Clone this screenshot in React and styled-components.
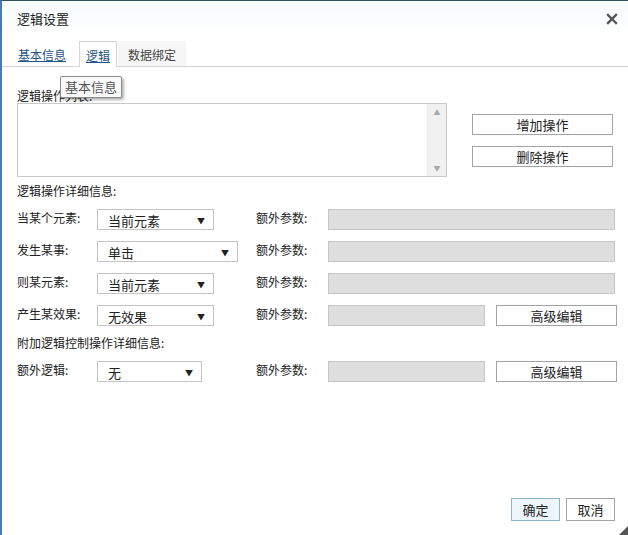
import React from 'react'
import styled, { createGlobalStyle } from 'styled-components'

const GlobalStyle = createGlobalStyle`
  html, body {
    margin: 0;
    padding: 0;
    background: #fff;
  }
  body {
    font-family: "Noto Sans CJK SC", "Liberation Sans", sans-serif;
    font-size: 12px;
    color: #222;
  }
`

const Dialog = styled.div`
  position: relative;
  width: 628px;
  height: 535px;
  box-sizing: border-box;
  border-left: 2px solid #4a78b8;
  border-top: 1px solid #34505e;
  display: flex;
  flex-direction: column;
  background: #fff;
`

const Header = styled.div`
  height: 35px;
  display: flex;
  align-items: center;
  justify-content: space-between;
  padding: 0 10px 0 15px;
  background: linear-gradient(#f6fbfd, #ffffff);
`

const Title = styled.span`
  font-size: 13px;
  line-height: 16px;
  color: #222;
`

const CloseButton = styled.button`
  border: 0;
  background: transparent;
  padding: 0;
  width: 12px;
  height: 12px;
  display: flex;
  cursor: pointer;
`

const TabBar = styled.div`
  margin-top: 5px;
  height: 25px;
  display: flex;
  align-items: stretch;
  padding-left: 9px;
  border-bottom: 1px solid #d6d6d6;
`

const Tab = styled.a`
  display: flex;
  align-items: center;
  padding: 2px ${p => (p.$muted ? 9 : 6)}px 0;
  margin-right: ${p => (p.$active ? 1 : 6)}px;
  font-size: 12px;
  line-height: 16px;
  color: ${p => (p.$link ? '#245588' : '#444')};
  text-decoration: ${p => (p.$link ? 'underline' : 'none')};
  border: 1px solid ${p => (p.$active ? '#d6d6d6' : 'transparent')};
  border-bottom: 0;
  background: ${p => (p.$muted ? '#f6f6f6' : '#fff')};
  margin-bottom: ${p => (p.$active ? '-1px' : '0')};
`

const Tooltip = styled.div`
  position: absolute;
  left: 58px;
  top: 75px;
  padding: 2px 4px;
  font-size: 13px;
  line-height: 16px;
  color: #555;
  background: #fafafa;
  border: 1px solid #8a8a8a;
  border-radius: 2px;
  box-shadow: 2px 2px 3px rgba(0, 0, 0, 0.3);
`

const Body = styled.div`
  flex: 1;
  display: flex;
  flex-direction: column;
  padding: 0 13px 14px 15px;
`

const SectionLabel = styled.div`
  font-size: 12px;
  line-height: 14px;
  margin-top: ${p => p.$top}px;
`

const ListRow = styled.div`
  display: flex;
`

const ListBox = styled.div`
  width: 430px;
  height: 74px;
  box-sizing: border-box;
  border: 1px solid #c8c8c8;
  display: flex;
  justify-content: flex-end;
`

const ScrollTrack = styled.div`
  width: 18px;
  background: #f1f1f1;
  border-left: 1px solid #ececec;
  display: flex;
  flex-direction: column;
  justify-content: space-between;
  align-items: center;
  padding: 4px 0;
  font-size: 7px;
  line-height: 8px;
  color: #a8a8a8;
`

const ButtonStack = styled.div`
  display: flex;
  flex-direction: column;
  gap: 11px;
  margin: 11px 0 0 25px;
`

const Button = styled.button`
  width: ${p => p.$w}px;
  height: ${p => p.$h || 21}px;
  box-sizing: border-box;
  border: 1px solid ${p => (p.$primary ? '#8fb4c9' : '#a3a3a3')};
  background: ${p => (p.$primary ? '#edf7fb' : '#fff')};
  font-family: "Noto Sans CJK SC", sans-serif;
  font-size: 13px;
  line-height: 16px;
  color: #222;
  padding: 0;
  cursor: pointer;
`

const FieldGrid = styled.div`
  display: grid;
  grid-template-columns: 80px 159px 72px 1fr;
  row-gap: 11px;
  margin-top: 11px;
`

const FieldLabel = styled.div`
  font-size: 12px;
  line-height: 16px;
  padding-top: 1px;
  color: #222;
`

const Select = styled.div`
  width: ${p => p.$w}px;
  height: 21px;
  box-sizing: border-box;
  border: 1px solid #c4c4c4;
  background: #fff;
  display: flex;
  align-items: center;
  justify-content: space-between;
  padding: 2px 8px 0 10px;
  font-size: 13px;
  line-height: 16px;
  color: #222;
`

const Caret = styled.span`
  font-size: 8px;
  line-height: 8px;
  color: #222;
`

const ParamCell = styled.div`
  display: flex;
  gap: 11px;
`

const ParamInput = styled.div`
  width: ${p => (p.$short ? '157px' : '287px')};
  height: 21px;
  box-sizing: border-box;
  border: 1px solid #c6c6c6;
  background: #dedede;
`

const Footer = styled.div`
  margin-top: auto;
  display: flex;
  justify-content: flex-end;
  gap: 6px;
`

const ResizeGrip = styled.div`
  position: absolute;
  right: 0;
  bottom: 0;
  width: 0;
  height: 0;
  border-style: solid;
  border-width: 0 0 9px 9px;
  border-color: transparent transparent #555 transparent;
`

const rows = [
  { label: '当某个元素:', value: '当前元素', w: 117 },
  { label: '发生某事:', value: '单击', w: 141 },
  { label: '则某元素:', value: '当前元素', w: 117 },
  { label: '产生某效果:', value: '无效果', w: 117, edit: true },
]

function FieldRow({ label, value, w, edit }) {
  return (
    <React.Fragment>
      <FieldLabel>{label}</FieldLabel>
      <div>
        <Select $w={w}>
          <span>{value}</span>
          <Caret>▼</Caret>
        </Select>
      </div>
      <FieldLabel>额外参数:</FieldLabel>
      <ParamCell>
        <ParamInput $short={edit} />
        {edit && <Button $w={121}>高级编辑</Button>}
      </ParamCell>
    </React.Fragment>
  )
}

export default function App() {
  return (
    <Dialog>
      <GlobalStyle />
      <Header>
        <Title>逻辑设置</Title>
        <CloseButton aria-label="close">
          <svg width="12" height="12" viewBox="0 0 12 12">
            <path d="M2 2 L10 10 M10 2 L2 10" stroke="#555" strokeWidth="2.4" strokeLinecap="square" />
          </svg>
        </CloseButton>
      </Header>
      <TabBar>
        <Tab $link>基本信息</Tab>
        <Tab $link $active>逻辑</Tab>
        <Tab $muted>数据绑定</Tab>
      </TabBar>
      <Body>
        <SectionLabel $top={22}>逻辑操作列表:</SectionLabel>
        <ListRow>
          <ListBox>
            <ScrollTrack>
              <span>▲</span>
              <span>▼</span>
            </ScrollTrack>
          </ListBox>
          <ButtonStack>
            <Button $w={141}>增加操作</Button>
            <Button $w={141}>删除操作</Button>
          </ButtonStack>
        </ListRow>
        <SectionLabel $top={7}>逻辑操作详细信息:</SectionLabel>
        <FieldGrid>
          {rows.map(r => (
            <FieldRow key={r.label} {...r} />
          ))}
        </FieldGrid>
        <SectionLabel $top={10}>附加逻辑控制操作详细信息:</SectionLabel>
        <FieldGrid>
          <FieldRow label="额外逻辑:" value="无" w={105} edit />
        </FieldGrid>
        <Footer>
          <Button $w={49} $h={23} $primary>确定</Button>
          <Button $w={49} $h={23}>取消</Button>
        </Footer>
      </Body>
      <Tooltip>基本信息</Tooltip>
      <ResizeGrip />
    </Dialog>
  )
}
